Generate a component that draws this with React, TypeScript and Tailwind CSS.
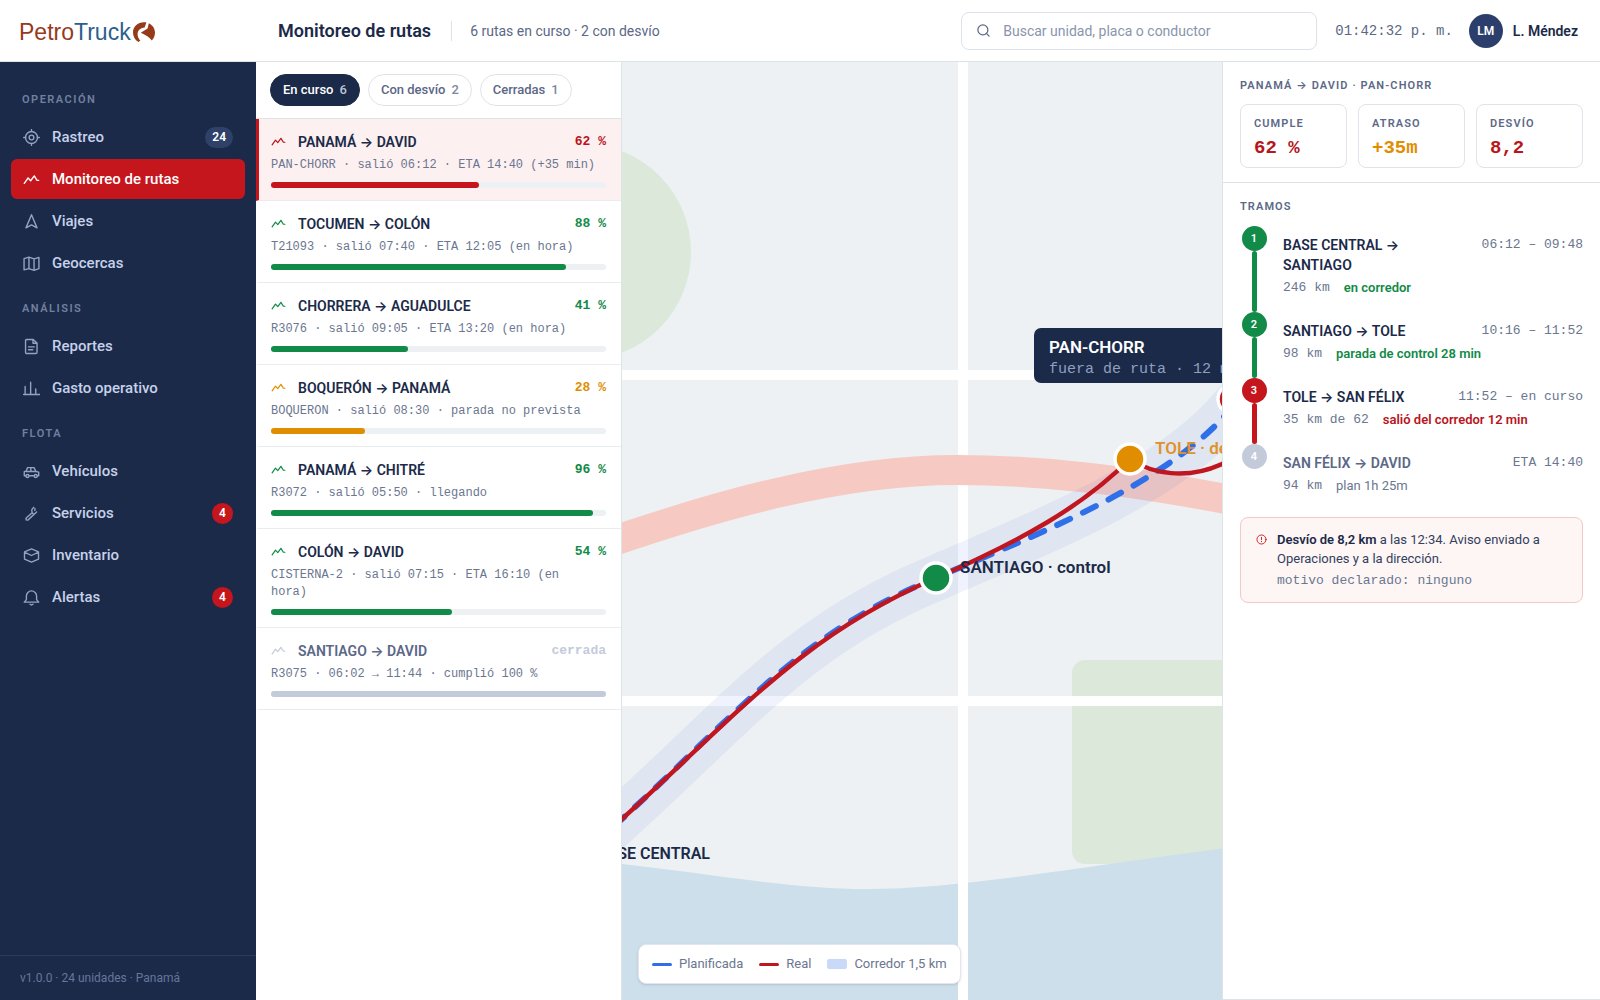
import React from 'react';
import { Search } from 'lucide-react';

type Tone = 'red' | 'green' | 'amber' | 'gray';

const icons: Record<string, React.ReactNode> = {
  target: (
    <>
      <circle cx="8" cy="8" r="5.6" />
      <circle cx="8" cy="8" r="2.2" />
      <path d="M8 .6v1.8M8 13.6v1.8M.6 8h1.8M13.6 8h1.8" />
    </>
  ),
  route: <path d="M1.2 11.6 4.8 6.6l2.4 2.6 3.4-4.6 2.6 4.2h1.6" />,
  nav: <path d="M8 1.6 13.2 14 8 11.2 2.8 14Z" />,
  map: <path d="M1 3.4 5.6 2l4.8 1.6L15 2.2v10.6l-4.6 1.6-4.8-1.6L1 14ZM5.6 2v10.8M10.4 3.6v10.8" />,
  doc: <path d="M3.6 1.4h6l3.6 3.4v8.6q0 1.2-1.2 1.2H3.6q-1.2 0-1.2-1.2V2.6q0-1.2 1.2-1.2ZM9.4 1.6v3.4h3.6M5.2 8.4h5.4M5.2 11h4" />,
  bars: <path d="M.6 13.6h15M2 13.4V6M7.2 13.4V2M12 13.4V8.4" />,
  car: (
    <>
      <path d="M2.8 12H1.2V8.2L3 7.6l1.2-3.2h6.2L12.2 8l2.6.6V12h-1.2M5.8 12h4.6M3 8h9.2M7.4 4.6V8" />
      <circle cx="4.2" cy="12.2" r="1.4" />
      <circle cx="12" cy="12.2" r="1.4" />
    </>
  ),
  wrench: <path d="M10 2.2 8.2 4.6l.4 2.6-5.8 5.2.2 1.6 1.8.2 8-7.6M6.8 12l2.6-2.4M8.6 7.2l1.2 1.2M11.2 3.2v2" />,
  box: <path d="M8 1.8 14.6 4.6v6.8L8 14.2l-6.6-2.8V4.6ZM1.4 4.8 8 8l6.6-3.2" />,
  bell: <path d="M1.2 12.4h13.6l-2-2.4V6.6a4.8 4.8 0 0 0-9.6 0V10ZM6.6 14.4q1.4 1.2 2.8 0" />,
  alert: (
    <>
      <circle cx="8" cy="8" r="6.6" />
      <path d="M8 4.8v3.6M8 10.8v.4" />
    </>
  ),
};

const Icon: React.FC<{ name: string; className?: string }> = ({ name, className }) => (
  <svg
    viewBox="0 0 16 16"
    fill="none"
    stroke="currentColor"
    strokeWidth="1.3"
    strokeLinecap="round"
    strokeLinejoin="round"
    aria-hidden="true"
    className={className}
  >
    {icons[name]}
  </svg>
);

const menu = [
  {
    title: 'Operación',
    items: [
      { icon: 'target', label: 'Rastreo', count: 24 },
      { icon: 'route', label: 'Monitoreo de rutas', active: true },
      { icon: 'nav', label: 'Viajes' },
      { icon: 'map', label: 'Geocercas' },
    ],
  },
  {
    title: 'Análisis',
    items: [
      { icon: 'doc', label: 'Reportes' },
      { icon: 'bars', label: 'Gasto operativo' },
    ],
  },
  {
    title: 'Flota',
    items: [
      { icon: 'car', label: 'Vehículos' },
      { icon: 'wrench', label: 'Servicios', alerts: 4 },
      { icon: 'box', label: 'Inventario' },
      { icon: 'bell', label: 'Alertas', alerts: 4 },
    ],
  },
] as {
  title: string;
  items: { icon: string; label: string; active?: boolean; count?: number; alerts?: number }[];
}[];

const tabs = [
  { label: 'En curso', count: 6, active: true },
  { label: 'Con desvío', count: 2, active: false },
  { label: 'Cerradas', count: 1, active: false },
];

const routes: { name: string; meta: string; pct: number; tone: Tone; status?: string; selected?: boolean }[] = [
  { name: 'PANAMÁ → DAVID', meta: 'PAN-CHORR · salió 06:12 · ETA 14:40 (+35 min)', pct: 62, tone: 'red', selected: true },
  { name: 'TOCUMEN → COLÓN', meta: 'T21093 · salió 07:40 · ETA 12:05 (en hora)', pct: 88, tone: 'green' },
  { name: 'CHORRERA → AGUADULCE', meta: 'R3076 · salió 09:05 · ETA 13:20 (en hora)', pct: 41, tone: 'green' },
  { name: 'BOQUERÓN → PANAMÁ', meta: 'BOQUERON · salió 08:30 · parada no prevista', pct: 28, tone: 'amber' },
  { name: 'PANAMÁ → CHITRÉ', meta: 'R3072 · salió 05:50 · llegando', pct: 96, tone: 'green' },
  { name: 'COLÓN → DAVID', meta: 'CISTERNA-2 · salió 07:15 · ETA 16:10 (en hora)', pct: 54, tone: 'green' },
  { name: 'SANTIAGO → DAVID', meta: 'R3075 · 06:02 → 11:44 · cumplió 100 %', pct: 100, tone: 'gray', status: 'cerrada' },
];

const stats: { label: string; value: string; tone: Tone }[] = [
  { label: 'Cumple', value: '62 %', tone: 'red' },
  { label: 'Atraso', value: '+35m', tone: 'amber' },
  { label: 'Desvío', value: '8,2', tone: 'red' },
];

const legs: { name: string; time: string; km: string; note: string; tone: Tone }[] = [
  { name: 'BASE CENTRAL → SANTIAGO', time: '06:12 – 09:48', km: '246 km', note: 'en corredor', tone: 'green' },
  { name: 'SANTIAGO → TOLE', time: '10:16 – 11:52', km: '98 km', note: 'parada de control 28 min', tone: 'green' },
  { name: 'TOLE → SAN FÉLIX', time: '11:52 – en curso', km: '35 km de 62', note: 'salió del corredor 12 min', tone: 'red' },
  { name: 'SAN FÉLIX → DAVID', time: 'ETA 14:40', km: '94 km', note: 'plan 1h 25m', tone: 'gray' },
];

const textTone: Record<Tone, string> = {
  red: 'text-[#b9151b]',
  green: 'text-[#128a48]',
  amber: 'text-[#e08e00]',
  gray: 'text-[#c3cbdb]',
};

const bgTone: Record<Tone, string> = {
  red: 'bg-[#c4161c]',
  green: 'bg-[#128a48]',
  amber: 'bg-[#e08e00]',
  gray: 'bg-[#c3cbdb]',
};

const mono = "font-['Liberation_Mono',monospace]";

const Logo: React.FC = () => (
  <a href="#" aria-label="PetroTruck" className="flex w-64 shrink-0 items-center pt-0.5 pl-[19px] font-['Liberation_Sans',sans-serif] text-[23px] leading-6">
    <span className="text-[#963a1a]">Petro</span>
    <span className="text-[#2c5f8c]">Truck</span>
    <svg viewBox="0 0 22 20" className="ml-0.5 h-5 w-[22px]" fill="#963a1a" aria-hidden="true">
      <path d="M13.4.4C5.6-.8 0 4 0 10.4 0 14.2 2 18 5.4 20l2-1.6C4.4 15.6 3.6 11 6 8c1.4-2 3.6-2.4 5.6-2.6Z" />
      <path d="M7.8 10.8 14.6 6.4 15.8 1.2C19.6 3 22 6.6 22 10.6c0 3.2-1.2 6-3.2 8-2.2-3-6-5.8-11-7.8Z" />
    </svg>
  </a>
);

const Header: React.FC = () => (
  <header className="flex h-[62px] shrink-0 items-center border-b border-[#dde4e8] bg-white pr-[22px]">
    <Logo />
    <h1 className="pl-[22px] text-lg font-semibold">Monitoreo de rutas</h1>
    <span className="mr-[18px] ml-5 h-5 w-px bg-[#dde4e8]" />
    <p className="text-sm text-[#5b6886]">6 rutas en curso · 2 con desvío</p>
    <label className="ml-auto flex h-[38px] w-[356px] items-center gap-3 rounded-lg border border-[#dde2ea] px-3.5">
      <Search size={15} strokeWidth={2} className="shrink-0 text-[#5b6886]" />
      <input
        type="search"
        aria-label="Buscar"
        placeholder="Buscar unidad, placa o conductor"
        className="w-full bg-transparent text-sm outline-none placeholder:text-[#8a95ad]"
      />
    </label>
    <time className={`${mono} ml-[18px] text-sm text-[#5b6886]`}>01:42:32 p. m.</time>
    <span className="ml-4 flex size-[34px] items-center justify-center rounded-full bg-[#2c3f6c] text-xs font-semibold text-white">LM</span>
    <span className="ml-2.5 text-sm font-semibold">L. Méndez</span>
  </header>
);

const Sidebar: React.FC = () => (
  <aside className="flex w-64 shrink-0 flex-col bg-[#1b2a49]">
    <nav className="flex flex-1 flex-col gap-0.5 px-[11px] pt-3.5">
      {menu.map((group) => (
        <React.Fragment key={group.title}>
          <h2 className="px-[11px] pt-[15px] pb-1.5 text-[11px] leading-[18px] font-semibold tracking-[1.5px] text-[#71809f] uppercase">
            {group.title}
          </h2>
          {group.items.map((item) => (
            <a
              key={item.label}
              href="#"
              className={`flex h-10 items-center gap-3 rounded-md px-3 text-[15px] font-medium ${item.active ? 'bg-[#c4161c] text-white' : 'text-[#c6d1ea]'}`}
            >
              <Icon name={item.icon} className={`size-[17px] shrink-0 ${item.active ? '' : 'text-[#93a3c4]'}`} />
              {item.label}
              {item.count && (
                <span className="ml-auto rounded-full bg-[#2f4169] px-[7px] text-xs leading-[21px] font-semibold text-white">{item.count}</span>
              )}
              {item.alerts && (
                <span className="ml-auto w-[21px] rounded-full bg-[#c4161c] text-center text-xs leading-[21px] font-semibold text-white">{item.alerts}</span>
              )}
            </a>
          ))}
        </React.Fragment>
      ))}
    </nav>
    <p className="border-t border-[#2c3b5b] px-5 py-3 text-xs leading-5 text-[#66769a]">v1.0.0 · 24 unidades · Panamá</p>
  </aside>
);

const RouteList: React.FC = () => (
  <section className="w-[366px] shrink-0 border-r border-[#dde4e8] bg-white">
    <div className="flex gap-2 border-b border-[#dde4e8] px-3.5 py-3">
      {tabs.map((tab) => (
        <button
          key={tab.label}
          type="button"
          className={`flex h-8 items-center gap-1.5 rounded-full border px-3 text-[13px] font-medium ${tab.active ? 'border-[#1b2a49] bg-[#1b2a49] text-white' : 'border-[#dfe3e9] text-[#5b6886]'}`}
        >
          {tab.label}
          <span className={tab.active ? 'text-[#bcc5d8]' : 'text-[#7d88a0]'}>{tab.count}</span>
        </button>
      ))}
    </div>
    <ul>
      {routes.map((route) => (
        <li
          key={route.name}
          className={`border-b border-l-3 border-b-[#e9edf0] pt-3 pr-[15px] pb-3 pl-3 ${route.selected ? 'border-l-[#c4161c] bg-[#fdf0f0]' : 'border-l-transparent'}`}
        >
          <div className="flex h-[21px] items-center">
            <Icon name="route" className={`size-[15px] ${textTone[route.tone]}`} />
            <h3 className={`ml-3 text-sm font-semibold ${route.status ? 'text-[#5b6886]' : ''}`}>{route.name}</h3>
            <span className={`${mono} ml-auto text-[13px] font-bold ${textTone[route.tone]}`}>{route.status ?? `${route.pct} %`}</span>
          </div>
          <p className={`${mono} mt-[5px] pr-2 text-xs leading-[17px] text-[#6b7690]`}>{route.meta}</p>
          <div className="mt-2 h-1.5 rounded-full bg-[#edf1f3]">
            <div className={`h-full rounded-full ${bgTone[route.tone]}`} style={{ width: `${route.pct}%` }} />
          </div>
        </li>
      ))}
    </ul>
  </section>
);

const corridor = 'M-60 806C-40 792-22 776 0 756C110 657 176 572 314 516C400 478 530 430 600 357L640 312';
const real = 'M-60 808C-40 794-22 777 0 757C110 658 178 574 314 516C400 478 460 445 508 397C530 412 565 418 600 402C640 382 640 360 611 337';

const RouteMap: React.FC = () => (
  <main className="relative min-w-0 flex-1 overflow-hidden bg-[#edf1f4]">
    <svg viewBox="0 0 600 938" preserveAspectRatio="xMidYMid slice" className="absolute inset-0 size-full" role="img" aria-label="Mapa de la ruta">
      <circle cx="-39" cy="190" r="108" fill="#dbe8da" />
      <rect x="450" y="598" width="260" height="204" rx="13" fill="#dbe8da" />
      <path d="M-20 800C80 810 165 827 245 827C340 827 470 803 620 784V960H-20Z" fill="#cddfea" />
      <path d="M0 313H640M0 639H640M341-20V960" stroke="#fff" strokeWidth="10" fill="none" />
      <path d="M-20 483C90 445 215 408 335 408C425 408 510 419 620 440" stroke="#f6cac3" strokeWidth="30" fill="none" />
      <path d={corridor} stroke="#3b66e0" strokeOpacity=".08" strokeWidth="46" fill="none" />
      {/* planned line, dashed out from SANTIAGO in both directions */}
      <g stroke="#2f6fe8" strokeWidth="6" strokeDasharray="14.3 14.3" strokeLinecap="round" fill="none">
        <path d="M314 516C176 572 110 657 0 757L-60 807" strokeDashoffset="5" />
        <path d="M314 516C400 478 530 430 600 357L640 312" strokeDashoffset="10.7" />
      </g>
      <path d={real} stroke="#c0161f" strokeWidth="4.5" fill="none" />
      <g stroke="#fff" strokeWidth="3.5">
        <circle cx="314" cy="516" r="15" fill="#128a48" />
        <circle cx="508" cy="397" r="15" fill="#e08e00" />
        <circle cx="611" cy="337" r="15" fill="#c4161c" />
      </g>
      <g fontSize="17" fontWeight="600" fill="#1b2a49">
        <text x="88" y="797" fontSize="16" textAnchor="end">BASE CENTRAL</text>
        <text x="338" y="511">SANTIAGO · control</text>
        <text x="533" y="392" fill="#e0922a">TOLE · desvío</text>
      </g>
      <rect x="412" y="266" width="240" height="55" rx="7" fill="#1b2a49" />
      <text x="427" y="291" fontSize="17" fontWeight="600" fill="#fff">PAN-CHORR</text>
      <text x="427" y="311" fontSize="15" fill="#8f9fc0" className={mono}>fuera de ruta · 12 min</text>
    </svg>
    <ul className="absolute bottom-4 left-4 flex h-10 items-center gap-4 rounded-lg border border-[#e2e6ee] bg-white px-[13px] text-[13px] text-[#6b7690] shadow-sm">
      <li className="flex items-center gap-[7px]">
        <span className="h-[3px] w-5 rounded-full bg-[#2f6fe8]" />
        Planificada
      </li>
      <li className="flex items-center gap-[7px]">
        <span className="h-[3px] w-5 rounded-full bg-[#c0161f]" />
        Real
      </li>
      <li className="flex items-center gap-[7px]">
        <span className="h-2.5 w-5 rounded-xs bg-[#c9d9f8]" />
        Corredor 1,5 km
      </li>
    </ul>
  </main>
);

const Detail: React.FC = () => (
  <aside className="w-[378px] shrink-0 border-b border-l border-[#dde4e8] bg-white">
    <div className="border-b border-[#dde4e8] px-[17px] pt-[15px] pb-3.5">
      <h2 className="text-[11px] leading-[18px] font-semibold tracking-widest text-[#5b6886]">PANAMÁ → DAVID · PAN-CHORR</h2>
      <dl className="mt-[9px] grid grid-cols-3 gap-[11px]">
        {stats.map((stat) => (
          <div key={stat.label} className="rounded-lg border border-[#dfe3ea] px-[13px] pt-2.5 pb-1.5">
            <dt className="text-[11px] leading-[18px] font-semibold tracking-widest text-[#5b6886] uppercase">{stat.label}</dt>
            <dd className={`${mono} mt-0.5 text-[19px] leading-[26px] font-bold ${textTone[stat.tone]}`}>{stat.value}</dd>
          </div>
        ))}
      </dl>
    </div>
    <div className="px-[17px] pt-[15px]">
      <h2 className="text-[11px] leading-[18px] font-semibold tracking-widest text-[#5b6886] uppercase">Tramos</h2>
      <ol className="mt-2.5">
        {legs.map((leg, i) => (
          <li key={leg.name} className="flex gap-[15px]">
            <div className="flex w-7 shrink-0 flex-col items-center">
              <span className={`size-[25px] shrink-0 rounded-full text-center text-[11px] leading-[25px] font-semibold text-white ${bgTone[leg.tone]}`}>{i + 1}</span>
              {i < legs.length - 1 && <span className={`w-[5px] flex-1 rounded-full ${bgTone[leg.tone]}`} />}
            </div>
            <div className="min-w-0 flex-1 pt-[9px] pb-3.5">
              <div className="flex items-start justify-between gap-4 leading-5">
                <h3 className={`text-sm font-semibold ${leg.tone === 'gray' ? 'text-[#5b6886]' : ''}`}>{leg.name}</h3>
                <span className={`${mono} text-[13px] leading-5 whitespace-nowrap text-[#6b7690]`}>{leg.time}</span>
              </div>
              <p className="mt-[3px] flex gap-3.5 text-[13px] leading-5 text-[#6b7690]">
                <span className={mono}>{leg.km}</span>
                <span className={leg.tone === 'gray' ? '' : `font-semibold ${textTone[leg.tone]}`}>{leg.note}</span>
              </p>
            </div>
          </li>
        ))}
      </ol>
      <div role="alert" className="mt-[7px] flex gap-2.5 rounded-lg border border-[#f2c9c7] bg-[#fdf6f5] px-[15px] py-3">
        <Icon name="alert" className="mt-1 size-[11px] shrink-0 text-[#c4161c]" />
        <div className="text-[13px] leading-[19px] text-[#33405e]">
          <p>
            <strong className="font-semibold text-[#1b2a49]">Desvío de 8,2 km</strong> a las 12:34. Aviso enviado a Operaciones y a la dirección.
          </p>
          <p className={`${mono} mt-[3px] text-[#6b7690]`}>motivo declarado: ninguno</p>
        </div>
      </div>
    </div>
  </aside>
);

const App: React.FC = () => (
  <div className="flex min-h-screen flex-col bg-white font-['Roboto','Inter',sans-serif] text-[#1b2a49]">
    <Header />
    <div className="flex flex-1">
      <Sidebar />
      <RouteList />
      <RouteMap />
      <Detail />
    </div>
  </div>
);

export default App;
